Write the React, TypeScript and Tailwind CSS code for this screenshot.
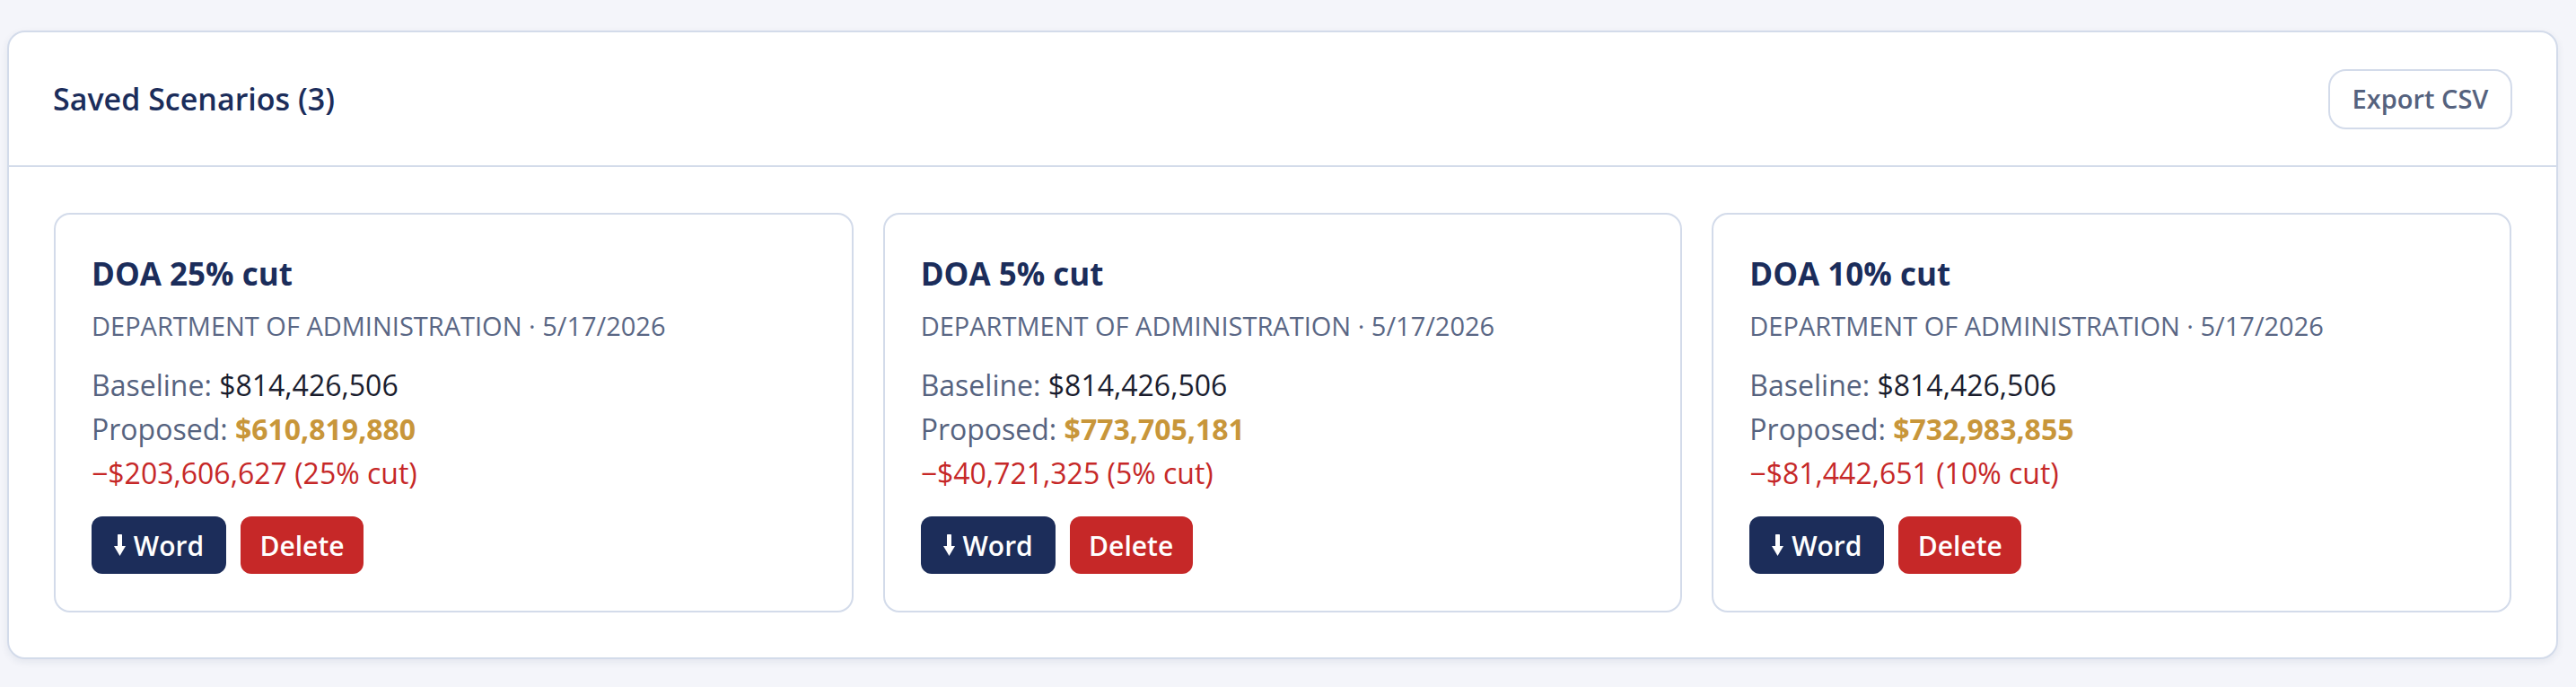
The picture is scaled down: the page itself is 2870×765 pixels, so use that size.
import React from "react";

type Scenario = {
  id: string;
  name: string;
  department: string;
  date: string;
  baseline: string;
  proposed: string;
  change: string;
};

// amounts come pre-formatted from the saved scenario records
const SCENARIOS: Scenario[] = [
  { id: "s1", name: "DOA 25% cut", department: "DEPARTMENT OF ADMINISTRATION", date: "5/17/2026", baseline: "$814,426,506", proposed: "$610,819,880", change: "−$203,606,627 (25% cut)" },
  { id: "s2", name: "DOA 5% cut", department: "DEPARTMENT OF ADMINISTRATION", date: "5/17/2026", baseline: "$814,426,506", proposed: "$773,705,181", change: "−$40,721,325 (5% cut)" },
  { id: "s3", name: "DOA 10% cut", department: "DEPARTMENT OF ADMINISTRATION", date: "5/17/2026", baseline: "$814,426,506", proposed: "$732,983,855", change: "−$81,442,651 (10% cut)" },
];

function DownArrow() {
  return (
    <svg width="13" height="24" viewBox="0 0 13 24" fill="currentColor" aria-hidden>
      <rect x="4" y="0" width="5" height="14" rx="0.6" />
      <path d="M0 13 H13 L6.5 24 Z" />
    </svg>
  );
}

function ScenarioCard({ s }: { s: Scenario }) {
  return (
    <article className="rounded-[18px] border-2 border-[#d3dbea] bg-white px-[40px] pb-[41px] pt-[41px]">
      <h4 className="text-[35px] font-bold leading-[50px] text-[#1b2d5b]">{s.name}</h4>
      <div className="mt-[13px] text-[29px] leading-[40px] text-[#5a6785]">
        {s.department} · {s.date}
      </div>
      <div className="mt-[21px] text-[32px] leading-[49px]">
        <div className="text-[#56637f]">
          Baseline: <span className="text-[#1a1d2e]">{s.baseline}</span>
        </div>
        <div className="text-[#56637f]">
          Proposed: <span className="font-bold text-[#c8963a]">{s.proposed}</span>
        </div>
        <div className="text-[#c62828]">{s.change}</div>
      </div>
      <div className="mt-[24px] flex gap-[16px]">
        <button className="flex h-[64px] w-[150px] items-center justify-center gap-[9px] rounded-[12px] bg-[#1c2d5a] text-[30px] font-semibold text-white">
          <DownArrow />
          Word
        </button>
        <button className="flex h-[64px] w-[137px] items-center justify-center rounded-[12px] bg-[#c62828] text-[30px] font-semibold text-white">
          Delete
        </button>
      </div>
    </article>
  );
}

export default function App() {
  return (
    <div
      className="min-h-[765px] bg-[#f4f5fa] pt-[34px]"
      style={{ fontFamily: '"Open Sans", "Noto Sans", sans-serif' }}
    >
      <section className="ml-[8px] w-[2842px] rounded-[20px] border-2 border-[#d3dbea] bg-white shadow-[0_3px_8px_rgba(30,45,90,0.08)]">
        <header className="flex h-[150px] items-center justify-between border-b-2 border-[#d3dbea] px-[49px]">
          <h3 className="text-[34px] font-semibold leading-[48px] text-[#1b2d5b]">Saved Scenarios (3)</h3>
          <button className="flex h-[67px] w-[205px] items-center justify-center rounded-[20px] border-2 border-[#d3dbea] bg-white text-[29px] font-semibold text-[#55627e]">
            Export CSV
          </button>
        </header>
        <div className="grid grid-cols-3 gap-[33px] px-[50px] pb-[50px] pt-[51px]">
          {SCENARIOS.map((s) => (
            <ScenarioCard key={s.id} s={s} />
          ))}
        </div>
      </section>
    </div>
  );
}
